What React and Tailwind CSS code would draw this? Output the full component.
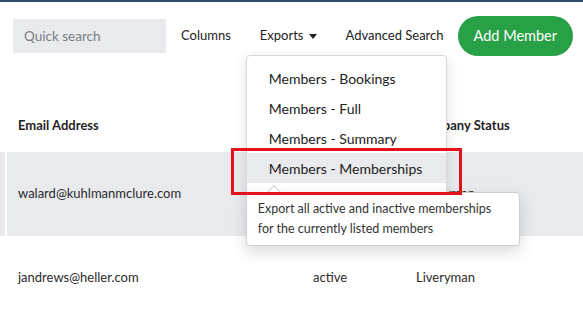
import { useState } from 'react';

const exportItems = ['Members - Bookings', 'Members - Full', 'Members - Summary', 'Members - Memberships'];

const rows = [
  { email: 'walard@kuhlmanmclure.com', status: 'active', company: 'Liveryman', shaded: true },
  { email: 'jandrews@heller.com', status: 'active', company: 'Liveryman', shaded: false },
];

const TableRow = ({ cells, shaded, header }) => (
  <div className={`flex ${header ? 'h-[52px]' : 'h-[84px]'}`}>
    <div className={`w-[5px] ${shaded ? 'bg-[#e9eaed]' : ''}`} />
    <div className="w-[2px]" />
    <div
      className={`flex-1 grid grid-cols-[306px_103px_1fr] items-center whitespace-nowrap ${shaded ? 'bg-[#e9eaed]' : ''} ${header ? 'font-bold text-[#1f1f1f]' : 'text-[#2b2b2b]'}`}
    >
      {cells.map((c, i) => (
        <div key={i} className={i === 0 ? 'pl-[11px]' : ''}>
          {c}
        </div>
      ))}
    </div>
  </div>
);

const App = () => {
  const [active] = useState(3);

  return (
    <div className="relative w-[583px] h-[312px] overflow-hidden bg-white border-t-2 border-[#2d4b6e] font-['Lato','Liberation_Sans',sans-serif] text-[13px]">
      {/* toolbar */}
      <div className="flex items-center h-[40px] mt-[14px] pl-[13px] whitespace-nowrap">
        <input
          placeholder="Quick search"
          className="w-[153px] shrink-0 h-[34px] bg-[#e9eaed] px-[11px] text-[13.5px] placeholder:text-[#7b7e84] outline-none"
        />
        <button className="shrink-0 pl-[15px] pr-[14px] text-[13px] text-[#222]">Columns</button>
        <div className="relative shrink-0">
          <button className="px-[15px] text-[13px] text-[#222] flex items-center">
            Exports
            <span className="ml-[5px] w-0 h-0 border-l-[4px] border-r-[4px] border-t-[5px] border-l-transparent border-r-transparent border-t-[#222]" />
          </button>

          {/* dropdown */}
          <div className="absolute z-10 left-[1px] top-[29px] w-[201px] pt-[7px] pb-[10px] bg-white border border-[#d8d8d8] rounded-[4px] shadow-[0_4px_14px_rgba(0,0,0,0.12)]">
            {exportItems.map((item, i) => (
              <div
                key={item}
                className={`h-[30px] flex items-center pl-[22px] text-[14px] text-[#222] whitespace-nowrap ${i === active ? 'bg-[#e9eaed]' : ''}`}
              >
                {item}
              </div>
            ))}
          </div>

          {/* tooltip */}
          <div className="absolute z-20 left-[1px] top-[166px] w-[274px] px-[11px] py-[6px] bg-white border border-[#cfcfcf] rounded-[4px] shadow-[0_6px_16px_rgba(0,0,0,0.15)] text-[12.5px] leading-[20px] text-[#333] whitespace-nowrap">
            <div className="absolute -top-[6px] left-[22px] w-[10px] h-[10px] bg-white border-l border-t border-[#cfcfcf] rotate-45" />
            <div className="relative">
              Export all active and inactive memberships
              <br />
              for the currently listed members
            </div>
          </div>
        </div>
        <button className="shrink-0 px-[14px] text-[13px] text-[#222]">Advanced Search</button>
        <button className="shrink-0 h-[40px] px-[16px] rounded-full bg-[#28a046] text-white text-[14.5px]">Add Member</button>
      </div>

      {/* table */}
      <div className="mt-[44px]">
        <TableRow header cells={['Email Address', 'Status', 'Company Status']} />
        {rows.map((r) => (
          <TableRow key={r.email} shaded={r.shaded} cells={[r.email, r.status, r.company]} />
        ))}
      </div>

      {/* highlight annotation */}
      <div className="absolute z-30 left-[231px] top-[146px] w-[231px] h-[47px] border-[3px] border-[#e3121b] pointer-events-none" />
    </div>
  );
};

export default App;
